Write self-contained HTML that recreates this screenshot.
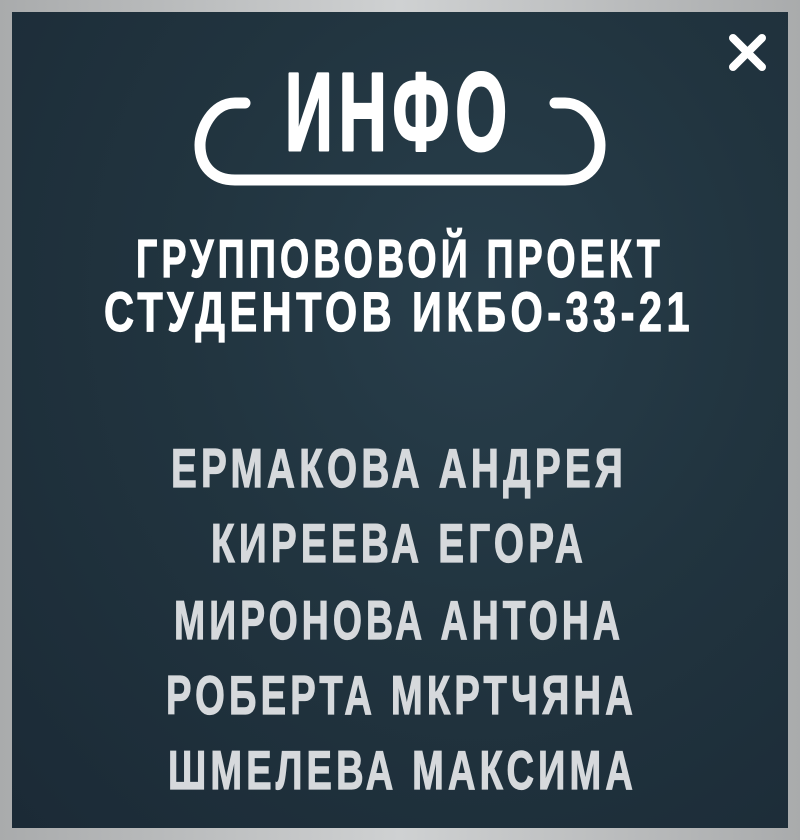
<!DOCTYPE html>
<html><head><meta charset="utf-8"><style>
html,body{margin:0;padding:0;}
body{width:800px;height:840px;background:linear-gradient(90deg,#a9abac,#cfd1d2 50%,#a9abac);overflow:hidden;position:relative;}
.panel{position:absolute;left:12px;top:12px;width:776px;height:816px;background:radial-gradient(ellipse at 60% 35%,#283e4b 0%,#21343f 45%,#1b2a36 100%);}
svg{position:absolute;left:0;top:0;}
text{font-family:"Liberation Sans",sans-serif;font-weight:bold;letter-spacing:6px;}
</style></head><body>
<div class="panel"></div>
<svg width="800" height="840" viewBox="0 0 800 840">
  <path d="M733 38 L762 67 M762 38 L733 67" stroke="#fff" stroke-width="8" stroke-linecap="round"/>
  <path d="M245 103 L235 103 C212 103 200 130 200 145 C200 165 212 180 235 180 L565 180 C588 180 600 165 600 145 C600 130 588 103 565 103 L555 103" fill="none" stroke="#fff" stroke-width="11" stroke-linecap="round"/>
  <text x="285" y="150" font-size="110" fill="#fff" stroke="#fff" stroke-width="3" stroke-linejoin="round" textLength="228" lengthAdjust="spacingAndGlyphs" style="letter-spacing:10px">ИНФО</text>
  <text x="136" y="277" font-size="54" fill="#fff" stroke="#fff" stroke-width="1.2" textLength="528" lengthAdjust="spacingAndGlyphs">ГРУППОВОВОЙ ПРОЕКТ</text>
  <text x="104" y="331" font-size="56" fill="#fff" stroke="#fff" stroke-width="1.2" textLength="590" lengthAdjust="spacingAndGlyphs">СТУДЕНТОВ ИКБО-33-21</text>
  <g fill="#d6d9dc" stroke="#d6d9dc" stroke-width="1.2" font-size="55">
    <text x="171" y="487" textLength="456" lengthAdjust="spacingAndGlyphs">ЕРМАКОВА АНДРЕЯ</text>
    <text x="211" y="562" textLength="376" lengthAdjust="spacingAndGlyphs">КИРЕЕВА ЕГОРА</text>
    <text x="174" y="639" textLength="450" lengthAdjust="spacingAndGlyphs">МИРОНОВА АНТОНА</text>
    <text x="166" y="714" textLength="471" lengthAdjust="spacingAndGlyphs">РОБЕРТА МКРТЧЯНА</text>
    <text x="168" y="789" textLength="469" lengthAdjust="spacingAndGlyphs">ШМЕЛЕВА МАКСИМА</text>
  </g>
</svg>
</body></html>
